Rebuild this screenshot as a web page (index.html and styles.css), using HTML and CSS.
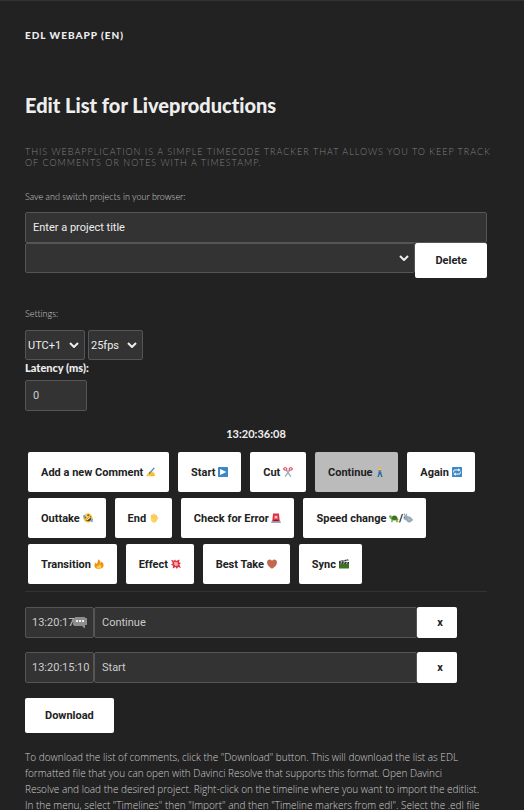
FILE: index.html
```html
<!DOCTYPE html>
<html lang="en">
<head>
<meta charset="utf-8">
<meta name="viewport" content="width=device-width, initial-scale=1">
<title>EDL Webapp (EN)</title>
<link rel="stylesheet" href="styles.css">
</head>
<body>
<main class="page">
  <h2 class="site">EDL Webapp (EN)</h2>
  <h1 class="title">Edit List for Liveproductions</h1>
  <p class="intro">This webapplication is a simple timecode tracker that allows you to keep track<br>of comments or notes with a timestamp.</p>

  <section class="projects">
    <label class="caption" for="project">Save and switch projects in your browser:</label>
    <input class="field strong" id="project" type="text" placeholder="Enter a project title">
    <div class="project-row">
      <select class="field select" aria-label="Saved projects"><option></option></select>
      <button class="btn" type="button">Delete</button>
    </div>
  </section>

  <section class="settings">
    <p class="caption">Settings:</p>
    <div class="setting-row">
      <select class="field select zone" aria-label="Time zone"><option>UTC+1</option></select>
      <select class="field select rate" aria-label="Frame rate"><option>25fps</option></select>
    </div>
    <label class="latency-label" for="latency">Latency (ms):</label>
    <input class="field latency" id="latency" type="text" inputmode="numeric" value="0">
  </section>

  <p class="clock">13:20:36:08</p>

  <div class="actions">
    <button class="btn cue" type="button">Add a new Comment
      <svg class="emoji" viewBox="0 0 12 12"><path fill="#ffc83d" d="M1 9 4 5.6 6.5 6 9.5 5.5l-1 1.3 2.3.2-.8 1.5.9.8-.9 1.7H3L.5 11z"/><path fill="#d99a2b" d="M4 8h4v.7H4zM6 9.5h4v.6H6z"/><path stroke="#3b88c3" stroke-width="1.6" d="m4.5 7 5.5-6"/><path fill="#17496d" d="m3.5 8.5.5-2 1.2 1.1z"/></svg></button>
    <button class="btn cue" type="button">Start
      <svg class="emoji" viewBox="0 0 12 12"><rect width="12" height="12" rx="1" fill="#3b88c3"/><path fill="#fff" d="M2.5 2.5 10 6 2.5 9.5z"/></svg></button>
    <button class="btn cue" type="button">Cut
      <svg class="emoji" viewBox="0 0 12 12"><path stroke="#99aab5" stroke-width="1.5" d="m4 4 5.5 7.5M8 4 2.5 11.5"/><g fill="none" stroke="#dd2e44" stroke-width="1.2"><ellipse cx="2.7" cy="2.3" rx="2" ry="1.5"/><ellipse cx="9.3" cy="2.3" rx="2" ry="1.5"/><path d="m4.2 3.4.8 1M7.8 3.4l-.8 1"/></g></svg></button>
    <button class="btn cue active" type="button">Continue
      <svg class="emoji" viewBox="0 0 12 12"><circle cx="5.6" cy="1.7" r="1.7" fill="#ffac33"/><path fill="#ffdc5d" d="M4.8 2h1.8v2H4.8z"/><path fill="#4289c1" d="M4.3 3.5h3L8 7l-1 .7H4.2z"/><path stroke="#2a6797" stroke-width="1.6" fill="none" d="M5.2 6.5 4.8 9l-1.3 3M6.5 6.5 7.2 9l1.2 3"/><path stroke="#e0aa94" d="m7.2 4.5 1.5 2.7"/></svg></button>
    <button class="btn cue" type="button">Again
      <svg class="emoji" viewBox="0 0 12 12"><rect width="12" height="12" rx="1" fill="#3b88c3"/><path fill="none" stroke="#fff" stroke-width="1.2" d="M2 6.5V5q0-1.5 1.5-1.5H8M10 5.5V7q0 1.5-1.5 1.5H4"/><path fill="#fff" d="M7.5 1.5 10.3 3.5 7.5 5.5zM4.5 6.5 1.7 8.5l2.8 2z"/></svg></button>
    <button class="btn cue" type="button">Outtake
      <svg class="emoji" viewBox="0 0 12 12"><circle cx="6" cy="6" r="5.6" fill="#ffcc4d"/><g transform="rotate(-38 6 6)"><path fill="#664500" d="M2.2 6h7.6q-.4 4-3.8 4T2.2 6z"/><path fill="#fff" d="M3 6.3h6v1.3H3z"/><path fill="none" stroke="#664500" stroke-width=".9" d="m2.6 2.5 2 1-2 1M9.4 2.5l-2 1 2 1"/></g><path fill="#5dadec" d="M0 3q2-1 3 0Q3 5.5 1.3 6 0 5 0 3zM9 9q1-2 2.8-2 .5 2.5-.8 4-1.5.3-2-2z"/></svg></button>
    <button class="btn cue" type="button">End
      <svg class="emoji" viewBox="0 0 12 12"><g fill="none" stroke="#ffcc4d" stroke-width="1.5" stroke-linecap="round"><path d="M3 6V2.7M5 5.5V1.2M7 5.5V1.5M9 6V3M8.5 8.5 10.700 6"/></g><path fill="#ffd55d" d="M2.2 5h7.6l-.3 4q-1 2.8-3.5 2.8T2.5 9z"/><path stroke="#efa64c" stroke-width=".6" fill="none" d="M4 2.500v3.500M6 2v4M8 2.500v3.500M8 7q-1 1-1 2"/></svg></button>
    <button class="btn cue" type="button">Check for Error
      <svg class="emoji" viewBox="0 0 12 12"><path fill="#99aab5" d="M1 9h10l1 3H0z"/><path fill="#dd2e44" d="M2.5.5h7l1 9.500h-9z"/><circle cx="6" cy="5" r="2.3" fill="#ea6b7b"/><path stroke="#fff" stroke-width=".8" d="m4.5 3.5 3 3m0-3-3 3"/><path fill="#a0041e" d="M3 8.5h6v1H3z"/></svg></button>
    <button class="btn cue" type="button">Speed change
      <svg class="emoji" viewBox="0 0 12 12"><path fill="#77b255" d="M0 4q1-2 3-1l1 4h6l2 1-1.500.8.5 2.200H9L8 9H5l-1 2H2.500L3 7.500Q0 7 0 4z"/><path fill="#3e721d" d="M3 7.500Q3 3 6.500 3T10.500 7.500Q7 9 3 7.500z"/><circle cx="1.300" cy="4" r=".4" fill="#292f33"/></svg>/<svg class="emoji" viewBox="0 0 12 12"><path fill="#99aab5" d="M.8 0q2 .8 2.700 3Q4 1 3.600 0q2 1.500 1.600 4 4-.3 5.500 2.500Q12 7 12 8.500q-.7 1.200-1.500 1-.7 2-3.500 2-2 0-3-2.500Q.3 8 .5 5.500q.3-1.300 1.400-1.800Q.5 2 .8 0z"/><circle cx="2" cy="5.500" r=".5" fill="#292f33"/><path stroke="#ccd6dd" stroke-width=".7" fill="none" d="M6 9q.5-2 2.500-2"/></svg></button>
    <button class="btn cue" type="button">Transition
      <svg class="emoji" viewBox="0 0 12 12"><path fill="#f4900c" d="M5.200.2Q8 1.500 8 5q.8-.5.8-2Q12 5 11.500 8T6 12Q.8 11.700.5 8 .3 6 2 4q0 1.500 1 2 2-2.500 2.200-5.800z"/><path fill="#ffcc4d" d="M6.500 6q2.500 1.500 2.300 3.500T6 11.800q-2.700 0-3-2-.1-1 .8-2 .2.800 1 .8Q6.500 7.500 6.500 6z"/></svg></button>
    <button class="btn cue" type="button">Effect
      <svg class="emoji" viewBox="0 0 12 12"><path fill="#dd2e44" d="m0 1 3.500 1L5 .5l1 1.800L10.500.6 9.500 4l2.500.8L10 6.500l1.800 4.300-3.300-1.300L7 12 5.500 9.500 2 11.500l.6-3.300L0 7l2.200-1.800z"/><path fill="#f4b6a0" d="m3 3 2 1 1-1 .8 1.200L8.500 3.500l-.7 2L9 6.500l-1.300.7.300 1.500-1.800-.9-1.500 1 .1-2L3 6.500l1.200-1z"/></svg></button>
    <button class="btn cue" type="button">Best Take
      <svg class="emoji" viewBox="0 0 12 12"><path fill="#c1694f" d="M6 2.200Q7 .5 9 .5q2.800.2 3 3.300Q12 8 6 11.800 0 8 0 3.800.2.700 3 .5q2 0 3 1.700z"/></svg></button>
    <button class="btn cue" type="button">Sync
      <svg class="emoji" viewBox="0 0 12 12"><rect y="5" width="12" height="6.500" rx=".8" fill="#3e721d"/><path fill="#292f33" d="m0 2.300 11-2 .4 1.700L.5 4zM0 3.700h12v2H0z"/><path stroke="#d5dde2" stroke-width="1.200" d="m2 1.700 1 2M5.500 1l1 2M9 .5l1 2M3 3.700 2 5.600M6.500 3.700l-1 1.900M10 3.700 9 5.600"/></svg></button>
  </div>

  <ul class="log">
    <li class="entry">
      <span class="stamp"><input class="field time" type="text" aria-label="Timecode" value="13:20:17"><svg class="bubble" viewBox="0 0 14 12"><path fill="#8d8d8d" d="M2 0h10v1h2v7h-2v3h-1L9 9H1V8H0V3h1V1h1z"/><path stroke="#eee" stroke-width="2" stroke-dasharray="2 1" d="M3 4h8"/></svg></span>
      <input class="field note" type="text" aria-label="Comment" value="Continue">
      <button class="btn remove" type="button">x</button>
    </li>
    <li class="entry">
      <span class="stamp"><input class="field time" type="text" aria-label="Timecode" value="13:20:15:10"></span>
      <input class="field note" type="text" aria-label="Comment" value="Start">
      <button class="btn remove" type="button">x</button>
    </li>
  </ul>
  <button class="btn download" type="button">Download</button>

  <p class="help">To download the list of comments, click the "Download" button. This will download the list as EDL<br>formatted file that you can open with Davinci Resolve that supports this format. Open Davinci<br>Resolve and load the desired project. Right-click on the timeline where you want to import the editlist.<br>In the menu, select "Timelines" then "Import" and then "Timeline markers from edl". Select the .edl file</p>
</main>
</body>
</html>
```
FILE: styles.css
```css
* { box-sizing: border-box; }
html { background: #222; }
body {
  margin: 0;
  border-top: 1px solid #333;
  color: #eee;
  font-family: Lato, sans-serif;
  font-size: 11px;
  line-height: 16px;
  font-variant-ligatures: none;
}
h1, h2, p, ul { margin: 0; padding: 0; }
.page { padding: 26px 37px 0 25px; }
.site {
  font-size: 10px;
  font-weight: 900;
  letter-spacing: 1px;
  text-transform: uppercase;
}
.title {
  margin-top: 50px;
  font-size: 20px;
  line-height: 24px;
  font-weight: 900;
}
.intro {
  margin-top: 29px;
  color: #808080;
  font-size: 9px;
  line-height: 11px;
  font-weight: 300;
  letter-spacing: 1px;
  text-transform: uppercase;
  white-space: nowrap;
}
.projects { margin-top: 21px; }
.caption {
  display: block;
  margin-bottom: 7px;
  color: #ccc;
  font-size: 9px;
  font-weight: 300;
}
.field {
  display: block;
  width: 100%;
  height: 31px;
  margin: 0;
  padding: 0 7px;
  border: 1px solid #555;
  border-radius: 2px;
  background-color: #333;
  color: #ccc;
  font-family: Roboto, sans-serif;
  font-size: 11px;
}
.strong::placeholder { color: #eee; opacity: 1; }
.select {
  height: 30px;
  padding: 0 2px;
  appearance: none;
  color: #eee;
  background-image: url("data:image/svg+xml,%3Csvg xmlns='http://www.w3.org/2000/svg' width='10' height='6'%3E%3Cpath d='M1 1l4 4 4-4' fill='none' stroke='%23eee' stroke-width='2'/%3E%3C/svg%3E");
  background-repeat: no-repeat;
  background-position: right 5px center;
}
.project-row { display: flex; align-items: flex-start; }
.project-row .select { flex: 1; }
.btn {
  height: 35px;
  margin: 0;
  padding: 0 20px;
  border: 0;
  border-radius: 2px;
  background: #fff;
  color: #222;
  font-family: Roboto, sans-serif;
  font-size: 11px;
  font-weight: 700;
  white-space: nowrap;
}
.settings { margin-top: 28px; }
.settings .caption { margin-bottom: 8px; }
.setting-row { display: flex; gap: 3px; }
.zone { width: 60px; }
.rate { width: 55px; }
.latency-label {
  display: block;
  margin-bottom: 5px;
  font-size: 11px;
  line-height: 15px;
  font-weight: 900;
}
.latency { width: 62px; }
.clock {
  margin-top: 15px;
  font-weight: 700;
  text-align: center;
}
.actions {
  display: flex;
  flex-wrap: wrap;
  gap: 6px 9px;
  margin-top: 10px;
  padding: 0 3px 7px;
  border-bottom: 1px solid #333;
}
.cue { height: 40px; padding: 0 13px; }
.active { background: #bbb; }
.emoji { width: 10px; height: 10px; vertical-align: -1px; }
.log {
  display: grid;
  gap: 14px;
  margin-top: 15px;
  list-style: none;
}
.entry { display: flex; padding-right: 30px; }
.stamp { position: relative; flex: 0 0 69px; }
.time { padding: 0 0 0 6px; }
.note { flex: 1; min-width: 0; }
.bubble {
  position: absolute;
  left: 48px;
  top: 10px;
  width: 14px;
  height: 12px;
}
.remove { width: 40px; height: 31px; padding: 0 0 0 6px; }
.download { display: block; margin-top: 15px; }
.help {
  margin-top: 16px;
  color: #ccc;
  font-family: "Open Sans", sans-serif;
  font-size: 10px;
  line-height: 16px;
  font-weight: 300;
  white-space: nowrap;
}
```
